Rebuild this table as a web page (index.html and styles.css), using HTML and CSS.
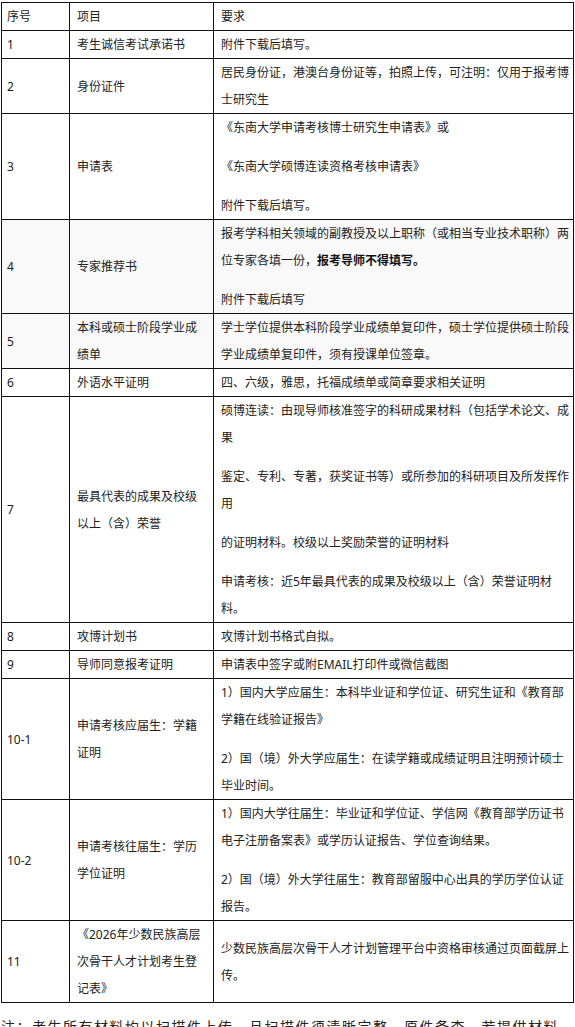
FILE: index.html
```html
<!DOCTYPE html>
<html lang="zh-CN">
<head>
<meta charset="utf-8">
<title>材料要求</title>
<link rel="stylesheet" href="styles.css">
</head>
<body>
<table class="req">
  <tbody>
    <tr>
      <td class="c1 w1">序号</td>
      <td class="c2 w2">项目</td>
      <td class="c3 w3">要求</td>
    </tr>
    <tr>
      <td class="c1">1</td>
      <td class="c2">考生诚信考试承诺书</td>
      <td class="c3">附件下载后填写。</td>
    </tr>
    <tr>
      <td class="c1">2</td>
      <td class="c2">身份证件</td>
      <td class="c3">居民身份证，港澳台身份证等，拍照上传，可注明：仅用于报考博<br>士研究生</td>
    </tr>
    <tr>
      <td class="c1">3</td>
      <td class="c2">申请表</td>
      <td class="c3">
        <p>《东南大学申请考核博士研究生申请表》或</p>
        <p>《东南大学硕博连读资格考核申请表》</p>
        <p>附件下载后填写。</p>
      </td>
    </tr>
    <tr class="shade">
      <td class="c1">4</td>
      <td class="c2">专家推荐书</td>
      <td class="c3">
        <p>报考学科相关领域的副教授及以上职称（或相当专业技术职称）两<br>位专家各填一份，<strong>报考导师不得填写。</strong></p>
        <p>附件下载后填写</p>
      </td>
    </tr>
    <tr class="shade">
      <td class="c1">5</td>
      <td class="c2">本科或硕士阶段学业成<br>绩单</td>
      <td class="c3">学士学位提供本科阶段学业成绩单复印件，硕士学位提供硕士阶段<br>学业成绩单复印件，须有授课单位签章。</td>
    </tr>
    <tr>
      <td class="c1">6</td>
      <td class="c2">外语水平证明</td>
      <td class="c3">四、六级，雅思，托福成绩单或简章要求相关证明</td>
    </tr>
    <tr>
      <td class="c1">7</td>
      <td class="c2">最具代表的成果及校级<br>以上（含）荣誉</td>
      <td class="c3">
        <p>硕博连读：由现导师核准签字的科研成果材料（包括学术论文、成<br>果</p>
        <p>鉴定、专利、专著，获奖证书等）或所参加的科研项目及所发挥作<br>用</p>
        <p>的证明材料。校级以上奖励荣誉的证明材料</p>
        <p>申请考核：近5年最具代表的成果及校级以上（含）荣誉证明材<br>料。</p>
      </td>
    </tr>
    <tr>
      <td class="c1">8</td>
      <td class="c2">攻博计划书</td>
      <td class="c3">攻博计划书格式自拟。</td>
    </tr>
    <tr>
      <td class="c1">9</td>
      <td class="c2">导师同意报考证明</td>
      <td class="c3">申请表中签字或附EMAIL打印件或微信截图</td>
    </tr>
    <tr>
      <td class="c1">10-1</td>
      <td class="c2">申请考核应届生：学籍<br>证明</td>
      <td class="c3">
        <p>1）国内大学应届生：本科毕业证和学位证、研究生证和《教育部<br>学籍在线验证报告》</p>
        <p>2）国（境）外大学应届生：在读学籍或成绩证明且注明预计硕士<br>毕业时间。</p>
      </td>
    </tr>
    <tr>
      <td class="c1">10-2</td>
      <td class="c2">申请考核往届生：学历<br>学位证明</td>
      <td class="c3">
        <p>1）国内大学往届生：毕业证和学位证、学信网《教育部学历证书<br>电子注册备案表》或学历认证报告、学位查询结果。</p>
        <p>2）国（境）外大学往届生：教育部留服中心出具的学历学位认证<br>报告。</p>
      </td>
    </tr>
    <tr>
      <td class="c1">11</td>
      <td class="c2">《2026年少数民族高层<br>次骨干人才计划考生登<br>记表》</td>
      <td class="c3">少数民族高层次骨干人才计划管理平台中资格审核通过页面截屏上<br>传。</td>
    </tr>
  </tbody>
</table>
<p class="note">注：考生所有材料均以扫描件上传，且扫描件须清晰完整，原件备查。若提供材料不实，取消报考资格。</p>
</body>
</html>
```

FILE: styles.css
```css
html, body {
  margin: 0;
  padding: 0;
  background: #ffffff;
}

body {
  padding: 2px 0 0 1px;
  font-family: "Noto Sans", "Noto Sans CJK SC", sans-serif;
  font-size: 12px;
  line-height: 27px;
  color: #222222;
}

.req {
  width: 573px;
  table-layout: fixed;
  border-collapse: separate;
  border-spacing: 0;
  border-top: 1px solid #111111;
  border-left: 1px solid #111111;
}

.req td {
  box-sizing: border-box;
  border-right: 1px solid #111111;
  border-bottom: 1px solid #111111;
  padding: 0 3px 0 7px;
  vertical-align: middle;
  text-align: left;
  word-break: break-all;
}

.req td.c1 {
  padding-left: 5px;
}

.w1 { width: 68px; }
.w2 { width: 144px; }
.w3 { width: 360px; }

.req p {
  margin: 0;
}

.req p + p {
  margin-top: 12px;
}

.req strong {
  font-weight: 700;
  color: #111111;
}

.shade td {
  background: #f9f9f9;
}

.note {
  margin: 13px 0 0 0;
  padding-right: 4px;
  font-size: 14px;
  line-height: 22px;
  letter-spacing: 1.5px;
  color: #222222;
}
```
